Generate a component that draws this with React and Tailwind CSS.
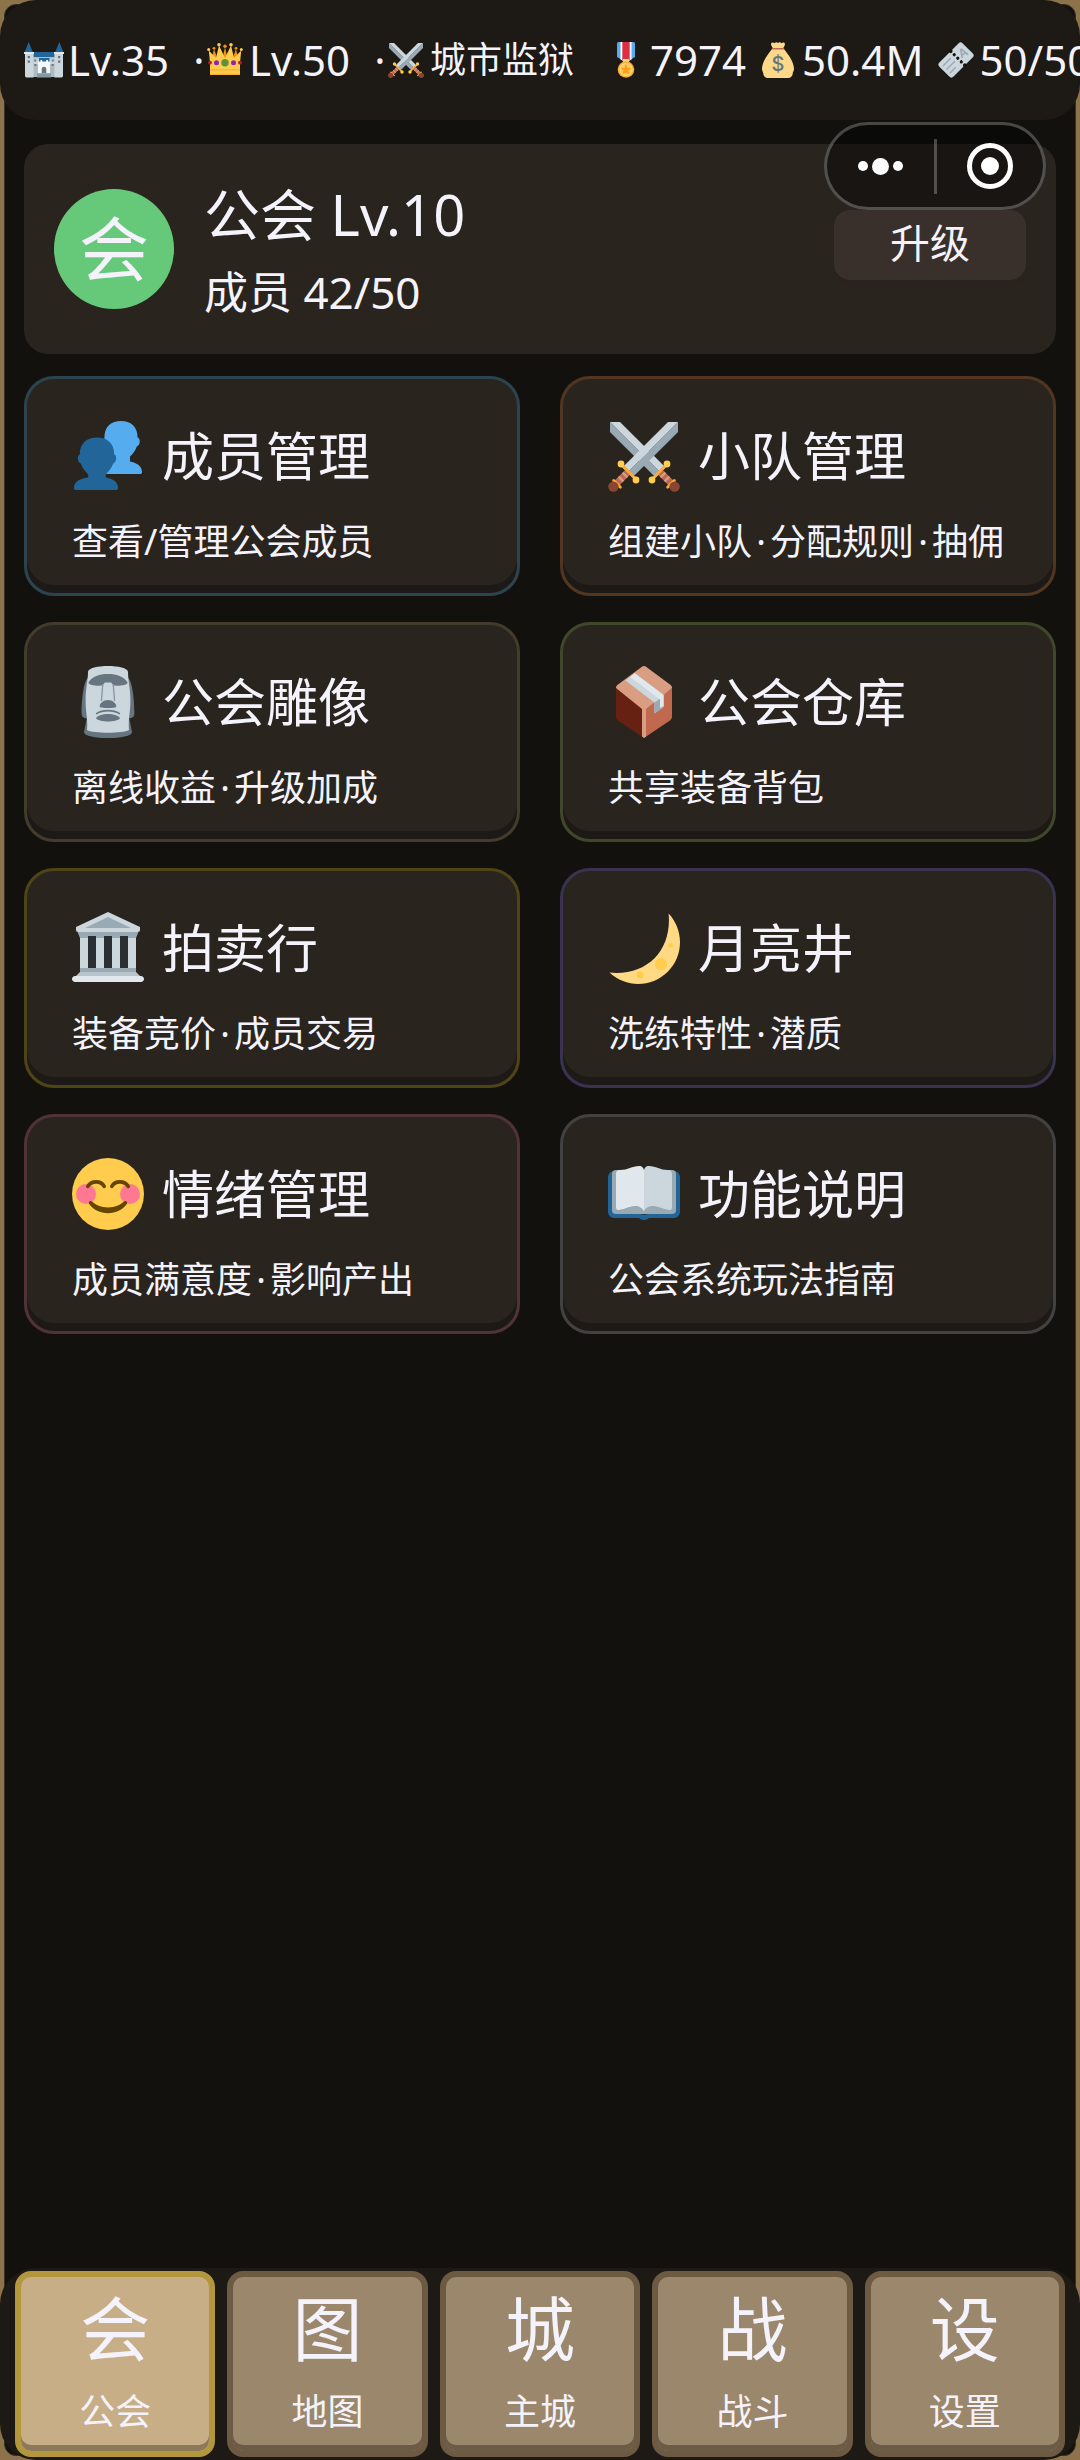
import React from "react";

function Castle({ className }) {
  return (
    <svg viewBox="0 0 40 36" className={className} aria-hidden="true">
      <path fill="#226699" d="M4.7 0 0.6 10h8.2zM35.3 0l-4.1 10h8.2zM8 10h24v6H8z" />
      <path fill="#AEBBC1" d="M9 15h22v20H9z" />
      <path fill="#CCD6DD" d="M1 12h8.6v23.4H2.5A1.5 1.5 0 0 1 1 34zM30.4 12H39v22a1.5 1.5 0 0 1-1.500 1.400h-7.100z" />
      <path fill="#CCD6DD" d="M10 16.500h20V22H10z" />
      <path fill="#E1E8ED" d="M0 10h10v2H0zM30 10h10v2H30z" />
      <path fill="#226699" d="M15 16h10.500v4H15z" />
      <path fill="#F5F8FA" d="M14 19.500h2.400v-1.500h1.800v1.500h4v-1.500H24v1.500h2V31H14z" />
      <path fill="#66757F" d="M17.700 31v-4a2.300 2.300 0 0 1 4.600 0v4z" />
      <path fill="#8899A6" d="M13 31.500h14v4H13z" />
      <path fill="#66757F" d="M3.700 14h2.300v2.200H3.700zM3.700 18.500h2.300v2.200H3.700zM34 14h2.300v2.200H34zM34 18.500h2.300v2.200H34zM10.300 17.500h1.900v2h-1.900zM10.300 22h1.900v2h-1.900zM27.800 17.500h1.900v2h-1.900zM27.800 22h1.900v2h-1.900z" />
    </svg>
  );
}

function Crown({ className }) {
  return (
    <svg viewBox="0 0 36 36" className={className} aria-hidden="true">
      <path fill="#F4900C" d="M14.200 22.500 18 5l3.800 17.500zM4 20 7 7l5 14zM24 21l5-14 3 13z" />
      <circle cx="18" cy="4.300" r="1.700" fill="#F4900C" />
      <circle cx="7" cy="6.300" r="1.400" fill="#F4900C" />
      <circle cx="29" cy="6.300" r="1.400" fill="#F4900C" />
      <path fill="#FFCC4D" d="M3 33V21L1.800 8.500 9 16l3-12.500L18 16l6-12.500L27 16l7.200-7.500L33 21v12z" />
      <g fill="#FFCC4D">
        <circle cx="12" cy="2.800" r="1.800" />
        <circle cx="24" cy="2.800" r="1.800" />
        <circle cx="1.700" cy="7.600" r="1.500" />
        <circle cx="34.300" cy="7.600" r="1.500" />
      </g>
      <path fill="#FFAC33" d="M3 27.200h30v1.200H3zM3 31.800h30V33H3z" />
      <circle cx="18" cy="20.700" r="3.700" fill="#5C913B" />
      <circle cx="9.500" cy="20.700" r="2.500" fill="#9224B5" />
      <circle cx="26.500" cy="20.700" r="2.500" fill="#9224B5" />
      <circle cx="3" cy="20.700" r="1.900" fill="#BE1931" />
      <circle cx="33" cy="20.700" r="1.900" fill="#BE1931" />
    </svg>
  );
}

function Swords({ className }) {
  return (
    <svg viewBox="0 0 36 36" className={className} aria-hidden="true">
      <path fill="#99AAB5" d="M1 1v5l22.800 22.800 2.500-2.500z" />
      <path fill="#CCD6DD" d="M1 1h5l22.800 22.800-2.500 2.500z" />
      <path fill="#99AAB5" d="M35 1v5L12.200 28.800l-2.500-2.500z" />
      <path fill="#CCD6DD" d="M35 1h-5L7.200 23.800l2.500 2.500z" />
      <path stroke="#BF6952" strokeWidth="3.400" d="M10.300 25.700 4 32M25.700 25.700 32 32" />
      <path stroke="#D99E82" strokeWidth="1.100" d="m7.300 26.300 2.400 2.400M5.300 28.300l2.400 2.400M28.700 26.300l-2.400 2.400M30.700 28.300l-2.400 2.400" />
      <path stroke="#FFAC33" strokeWidth="1.400" strokeLinecap="round" d="M6.700 22.300 14 29.800M29.300 22.300 22 29.800M2.800 30.200l3.400 3.400M33.200 30.200l-3.400 3.400" />
      <g fill="#FFCC4D">
        <circle cx="6.500" cy="22" r="1.700" />
        <circle cx="14" cy="30" r="1.700" />
        <circle cx="29.500" cy="22" r="1.700" />
        <circle cx="22" cy="30" r="1.700" />
      </g>
      <circle cx="2.700" cy="33.300" r="2.600" fill="#8A4633" />
      <circle cx="33.300" cy="33.300" r="2.600" fill="#8A4633" />
    </svg>
  );
}

function Medal({ className }) {
  return (
    <svg viewBox="0 0 36 36" className={className} aria-hidden="true">
      <path fill="#55ACEE" d="M10.500 0h15A1.500 1.500 0 0 1 27 1.500V15l-9 5.500L9 15V1.500A1.500 1.500 0 0 1 10.500 0z" />
      <path fill="#fff" d="M12.500 0h11v17.500L18 20.500l-5.500-3z" />
      <path fill="#DD2E44" d="M14.300 0h7.400v18L18 20.500 14.300 18z" />
      <path fill="#FFD983" d="M15 17h6v3h-6z" />
      <circle cx="18" cy="27.500" r="8.300" fill="#FFAC33" />
      <circle cx="18" cy="27.500" r="6.600" fill="#FFD983" />
      <circle cx="18" cy="27.500" r="5.400" fill="#FFCC4D" />
      <path fill="#FF9D1E" d="m18 22 1.500 3.700 4 .3-3.100 2.600 1 3.900-3.400-2.100-3.400 2.100 1-3.900-3.100-2.600 4-.300z" />
    </svg>
  );
}

function MoneyBag({ className }) {
  return (
    <svg viewBox="0 0 36 36" className={className} aria-hidden="true">
      <path fill="#FDD888" d="M12 7h12c2.500 3.500 10 12 10 20 0 2-1.300 3-1.300 4.500 0 2.500-2.200 4.500-4.700 4.500H8c-2.500 0-4.700-2-4.700-4.500C3.300 30 2 29 2 27 2 19 9.500 10.500 12 7z" />
      <path fill="#FDD888" d="M11 2c0-2 2.500-2 3.500-.800C15.500 0 17 0 18 1c1-1 2.500-1 3.500.200C22.500 0 25 0 25 2c0 2-1.500 3-2 4.500H13C12.500 5 11 4 11 2z" />
      <path stroke="#BF6952" strokeWidth="1.400" strokeLinecap="round" d="M12.500 6.800h11" />
      <text x="18" y="28.500" textAnchor="middle" fontSize="20" fontWeight="500" fontFamily="Inter, sans-serif" fill="#67757F">$</text>
    </svg>
  );
}

function Ticket({ className }) {
  return (
    <svg viewBox="0 0 36 36" className={className} aria-hidden="true">
      <g transform="rotate(-45 18 18)">
        <rect x="1.500" y="8" width="33" height="20" rx="3" fill="#CCD6DD" />
        <path stroke="#99AAB5" strokeWidth="1.400" strokeLinecap="round" d="M5 13h10M5 18h11M5 23h7" />
        <g fill="#15130f">
          <circle cx="20.500" cy="8" r="1.900" />
          <circle cx="20.500" cy="13" r="1.600" />
          <circle cx="20.500" cy="18" r="1.600" />
          <circle cx="20.500" cy="23" r="1.600" />
          <circle cx="20.500" cy="28" r="1.900" />
        </g>
        <text x="28" y="22" textAnchor="middle" fontSize="12" fontWeight="600" fontFamily="Inter, sans-serif" fill="#99AAB5" transform="rotate(15 28 18)">A</text>
      </g>
    </svg>
  );
}

function People({ className }) {
  return (
    <svg viewBox="0 0 36 36" className={className} aria-hidden="true">
      <path fill="#55ACEE" d="M16.200 9c0-6 3.500-8.500 8.300-8.500s8.300 2.700 8.300 8.200c1.500.3 1.500 4-.400 4.500-.7 2-1.900 3.700-3.400 5v2.600c3 .6 6 2.100 6 5.200 0 .7-.3 1-1 1H17z" />
      <path fill="#226699" d="M3.900 17.300c0-6 3.700-8.600 8.600-8.600s8.600 2.700 8.600 8.600c1.400.3 1.300 4-.5 4.500-.8 2.200-2.200 4-3.700 5.400v1.600c3.500.5 6.100 2.200 6.100 5.200 0 .7-.4 1-1 1H2c-.6 0-1-.3-1-1 0-3 2.700-4.700 7.100-5.200v-1.600c-1.600-1.400-2.900-3.200-3.700-5.400-1.800-.5-1.900-4.200-.5-4.500z" />
    </svg>
  );
}

function Moai({ className }) {
  return (
    <svg viewBox="0 0 36 36" className={className} aria-hidden="true">
      <path fill="#66757F" d="M8 6c-2 1-3.200 10-3.200 17.500 0 2 1 2.600 2.600 2.600L6 33c0 4 24 4 24 0l-1.400-6.900c1.600 0 2.600-.6 2.600-2.600C31.200 16 30 7 28 6z" />
      <path fill="#CCD6DD" d="M8 3c0-4 20-4 20 0 0 4 1.200 8 1.200 14 0 7-1.200 9-.7 15-3 1.800-18 1.800-21 0 .5-6-.7-8-.7-15C6.800 11 8 7 8 3z" />
      <path fill="#66757F" d="M8.200 8.200c2-3 5.500-4.200 9.800-4.200s7.800 1.200 9.800 4.200c0 1.200-3.800 1.900-7 1.600l-1.200-1.600h-3.200l-1.200 1.600c-3.200.3-7-.4-7-1.600z" />
      <path fill="none" stroke="#8899A6" strokeWidth=".7" d="m15.400 9-.7 8.500M20.600 9l.7 8.500" />
      <path fill="#66757F" d="M13.800 20.300c0-1.500 1.800-3.300 4.200-3.300s4.200 1.800 4.200 3.300c0 1-8.400 1-8.400 0z" />
      <path fill="none" stroke="#66757F" strokeWidth=".8" strokeLinecap="round" d="M12.300 23.800c3-2 8.400-2 11.400 0" />
      <path fill="#66757F" d="M12 26.200c1-3 11-3 12 0-2 2-10 2-12 0z" />
    </svg>
  );
}

function Parcel({ className }) {
  return (
    <svg viewBox="0 0 36 36" className={className} aria-hidden="true">
      <path fill="#662113" d="M4 11v14.300c0 .8.400 1.400 1 1.900L18 36V21z" />
      <path fill="#C1694F" d="M32 11v14.300c0 .8-.4 1.400-1 1.900L18 36V21z" />
      <path fill="#D99E82" d="M16.800.500c.8-.600 1.600-.600 2.400 0L31 9.200c.7.500 1 1 1 1.800L19 21.500V35.300l-1 .7-1-.7V21.500L4 11c0-.8.300-1.300 1-1.800z" />
      <path fill="#CCD6DD" d="m8.700 7.200 4.700-3.600L27.800 14.500v6l-4.600 3.200v-5.400z" />
      <path fill="#99AAB5" d="m23.200 18.300 2-1.400 2.600-2.400v6l-4.600 3.200z" />
      <path fill="#E1E8ED" d="m11 5.500 2.400-1.900 14.400 10.900v5.500l-1.800 1v-4.400z" />
    </svg>
  );
}

function Bank({ className }) {
  return (
    <svg viewBox="0 0 36 36" className={className} aria-hidden="true">
      <path fill="#CCD6DD" d="M18 0 34 7.500V9c0 .6-.4 1-1 1H3c-.6 0-1-.4-1-1V7.500zM4 12h28v17H4z" />
      <path fill="#9AAAB4" d="m18 2.500 11.500 5.500h-23zM2.800 10h30.400L32 13H4zM4 28h28v2H4z" />
      <path fill="#292F33" d="M8 12h4v16H8zM16 12h4v16h-4zM24 12h4v16h-4z" />
      <path fill="#B8C5CD" d="m4 30h28l2 2H2z" />
      <path fill="#E1E8ED" d="M1.500 32h33c.8 0 1.500.7 1.500 1.500S35.300 35 34.500 35h-33C.7 35 0 34.300 0 33.500S.7 32 1.500 32z" />
    </svg>
  );
}

function Moon({ className }) {
  return (
    <svg viewBox="0 0 36 36" className={className} aria-hidden="true">
      <path fill="#FFD983" d="M30.312.776C32 19 20 32 .776 30.312c8.199 7.717 21.091 7.588 29.107-.429C37.900 21.867 38.030 8.975 30.312.776z" />
      <circle cx="31.300" cy="16.700" r="1.200" fill="#FFCC4D" />
      <circle cx="26.500" cy="26" r="3" fill="#FFCC4D" />
      <circle cx="16" cy="31.500" r="1.700" fill="#FFCC4D" />
    </svg>
  );
}

function Smile({ className }) {
  return (
    <svg viewBox="0 0 36 36" className={className} aria-hidden="true">
      <circle cx="18" cy="18" r="18" fill="#FFCC4D" />
      <circle cx="7" cy="18" r="5" fill="#FF7892" />
      <circle cx="29" cy="18" r="5" fill="#FF7892" />
      <path fill="none" stroke="#664500" strokeWidth="1.800" strokeLinecap="round" d="M7.900 14.200c1.800-3 6.600-3 8.200 0M19.900 14.200c1.600-3 6.400-3 8.200 0" />
      <path fill="#664500" d="M8.700 21.700c-.500.500-.300 1 0 1.400 2 2.700 5.300 4.500 9.300 4.500s7.300-1.800 9.300-4.500c.3-.4.500-.9 0-1.400-.4-.3-.9-.2-1.300.1-2 1.800-4.500 2.900-8 2.900s-6-1.100-8-2.900c-.4-.3-.9-.4-1.300-.1z" />
    </svg>
  );
}

function Book({ className }) {
  return (
    <svg viewBox="0 0 36 36" className={className} aria-hidden="true">
      <path fill="#226699" d="M3 6.500h30a3 3 0 0 1 3 3V27a3 3 0 0 1-3 3H20.500c-1 1.300-4 1.300-5 0H3a3 3 0 0 1-3-3V9.500a3 3 0 0 1 3-3z" />
      <path fill="#99AAB5" d="M4 6h28a2 2 0 0 1 2 2v18a2 2 0 0 1-2 2H4a2 2 0 0 1-2-2V8a2 2 0 0 1 2-2z" />
      <path fill="#292F33" d="M18 27c-.6.800-1.300 1-1.700 1 .6.600 2.800.6 3.400 0-.4 0-1.100-.2-1.700-1z" />
      <path fill="#E1E8ED" d="M4 8c0-1.200.6-2 2-2 4 0 6-2 9.500-2C17 4 18 5 18 6.500v20.500c-1-1.700-2.500-2.700-4.500-2.700-3 0-5 1.700-8 1.700-1 0-1.500-.5-1.500-1.300z" />
      <path fill="#CCD6DD" d="M32 8c0-1.200-.6-2-2-2-4 0-6-2-9.500-2C19 4 18 5 18 6.500v20.500c1-1.700 2.500-2.700 4.500-2.700 3 0 5 1.700 8 1.700 1 0 1.500-.5 1.500-1.300z" />
      <path fill="#99AAB5" d="M5 26c3 0 5.500-2 8.500-2 2 0 3.800 1 4.500 2.700.7-1.700 2.500-2.700 4.500-2.700 3 0 5.500 2 8.500 2v.6c-4 1-6.500 1.400-9 1.400h-8c-2.500 0-5-.4-9-1.400z" />
    </svg>
  );
}

function Stat({ icon, children }) {
  return (
    <span className="flex shrink-0 items-center gap-1">
      <span className="flex w-10 justify-center">{icon}</span>
      <span>{children}</span>
    </span>
  );
}

function Dot() {
  return <span className="inline-block w-3 shrink-0 text-center">·</span>;
}

function Phrases({ text }) {
  return text.split("·").map((part, i) => (
    <React.Fragment key={part}>
      {i > 0 && <span className="inline-block w-[18px] text-center">·</span>}
      {part}
    </React.Fragment>
  ));
}

const cards = [
  { title: "成员管理", sub: "查看/管理公会成员", Icon: People, border: "border-[#2c4450]" },
  { title: "小队管理", sub: "组建小队·分配规则·抽佣", Icon: Swords, border: "border-[#533620]" },
  { title: "公会雕像", sub: "离线收益·升级加成", Icon: Moai, border: "border-[#433b2c]" },
  { title: "公会仓库", sub: "共享装备背包", Icon: Parcel, border: "border-[#40482a]" },
  { title: "拍卖行", sub: "装备竞价·成员交易", Icon: Bank, border: "border-[#4f4415]" },
  { title: "月亮井", sub: "洗练特性·潜质", Icon: Moon, border: "border-[#3b3150]" },
  { title: "情绪管理", sub: "成员满意度·影响产出", Icon: Smile, border: "border-[#513236]" },
  { title: "功能说明", sub: "公会系统玩法指南", Icon: Book, border: "border-[#434241]" },
];

const tabs = [
  { mark: "会", label: "公会", active: true },
  { mark: "图", label: "地图" },
  { mark: "城", label: "主城" },
  { mark: "战", label: "战斗" },
  { mark: "设", label: "设置" },
];

export default function App() {
  return (
    <div
      lang="zh-CN"
      className="relative flex min-h-screen flex-col overflow-hidden bg-[#8c734b] p-1 font-['Noto_Sans','Noto_Sans_CJK_SC',sans-serif] text-[#f4f3fb]"
    >
      <div className="flex grow flex-col rounded-xl border border-[#3c3222] bg-[#12110e]">
        <header className="-mx-[5px] -mt-[5px] flex h-[120px] items-center overflow-hidden whitespace-nowrap rounded-[36px] bg-[#1d1914] pl-6 text-[42px] leading-[60px]">
          <div className="flex shrink-0 items-center gap-6">
            <Stat icon={<Castle className="h-9 w-10 shrink-0" />}>Lv.35</Stat>
            <span className="flex shrink-0 items-center">
              <Dot />
              <Stat icon={<Crown className="size-9" />}>Lv.50</Stat>
            </span>
            <span className="flex shrink-0 items-center">
              <Dot />
              <Stat icon={<Swords className="size-9" />}>
                <span className="block text-4xl leading-[60px]">城市监狱</span>
              </Stat>
            </span>
          </div>
          <div className="ml-8 flex shrink-0 items-center gap-3">
            <Stat icon={<Medal className="size-9" />}>7974</Stat>
            <Stat icon={<MoneyBag className="size-9" />}>50.4M</Stat>
            <Stat icon={<Ticket className="size-9" />}>50/50</Stat>
          </div>
        </header>

        <main className="flex grow flex-col gap-[22px] px-[19px] py-6">
          <section className="flex items-center rounded-3xl bg-[#29241e] px-[30px] py-8">
            <div className="flex size-[120px] shrink-0 items-center justify-center rounded-full bg-[#66c97a] text-[70px] leading-none">会</div>
            <div className="flex grow flex-col gap-[10px] pl-[30px]">
              <h1 className="text-[56px] leading-[76px]">公会 Lv.10</h1>
              <p className="text-[44px] leading-[60px]">成员 42/50</p>
            </div>
            <button type="button" className="h-[78px] w-48 shrink-0 rounded-2xl bg-[#39302c] pb-3 text-[40px] leading-none shadow-[inset_0_-8px_0_#28231e]">
              升级
            </button>
          </section>

          <section className="grid grid-cols-2 gap-x-10 gap-y-[26px]">
            {cards.map(({ title, sub, Icon, border }) => (
              <button
                key={title}
                type="button"
                className={`${border} rounded-[30px] border-[3px] bg-[#29241e] px-[45px] pt-[41px] pb-[31px] text-left shadow-[inset_0_-8px_0_#1d1916]`}
              >
                <span className="flex items-center gap-[18px]">
                  <Icon className="size-[72px] shrink-0" />
                  <span className="whitespace-nowrap text-[52px] leading-[72px]">{title}</span>
                </span>
                <span className="mt-[30px] block whitespace-nowrap text-4xl leading-10">
                  <Phrases text={sub} />
                </span>
              </button>
            ))}
          </section>
        </main>

        <nav className="-mx-[5px] -mb-[5px] grid grid-cols-5 gap-3 rounded-[36px] bg-[#1d1914] px-[15px] py-[3px]">
          {tabs.map(({ mark, label, active }) => (
            <button
              key={label}
              type="button"
              aria-current={active ? "page" : undefined}
              className={`${
                active
                  ? "border-[#b3973c] bg-[#c7ae86] shadow-[inset_0_-6px_0_#8c795c]"
                  : "border-[#6d5a42] bg-[#9b876c] shadow-[inset_0_-6px_0_#6b5c48]"
              } flex flex-col items-center gap-[25px] rounded-2xl border-[6px] pt-[14px] pb-[19px]`}
            >
              <span className="text-[70px] leading-[76px]">{mark}</span>
              <span className="text-4xl leading-10">{label}</span>
            </button>
          ))}
        </nav>
      </div>

      <div className="absolute top-[122px] right-[34px] flex h-[88px] w-[222px] items-center rounded-full border-[3px] border-white/25 bg-black/40">
        <button type="button" aria-label="更多" className="flex grow basis-0 items-center justify-center gap-1">
          <span className="size-[10px] rounded-full bg-white" />
          <span className="size-[17px] rounded-full bg-white" />
          <span className="size-[10px] rounded-full bg-white" />
        </button>
        <span className="h-[55px] w-[3px] bg-white/25" />
        <button type="button" aria-label="关闭" className="flex grow basis-0 items-center justify-center">
          <span className="flex size-[46px] items-center justify-center rounded-full border-[5px] border-white">
            <span className="size-[18px] rounded-full bg-white" />
          </span>
        </button>
      </div>
    </div>
  );
}
